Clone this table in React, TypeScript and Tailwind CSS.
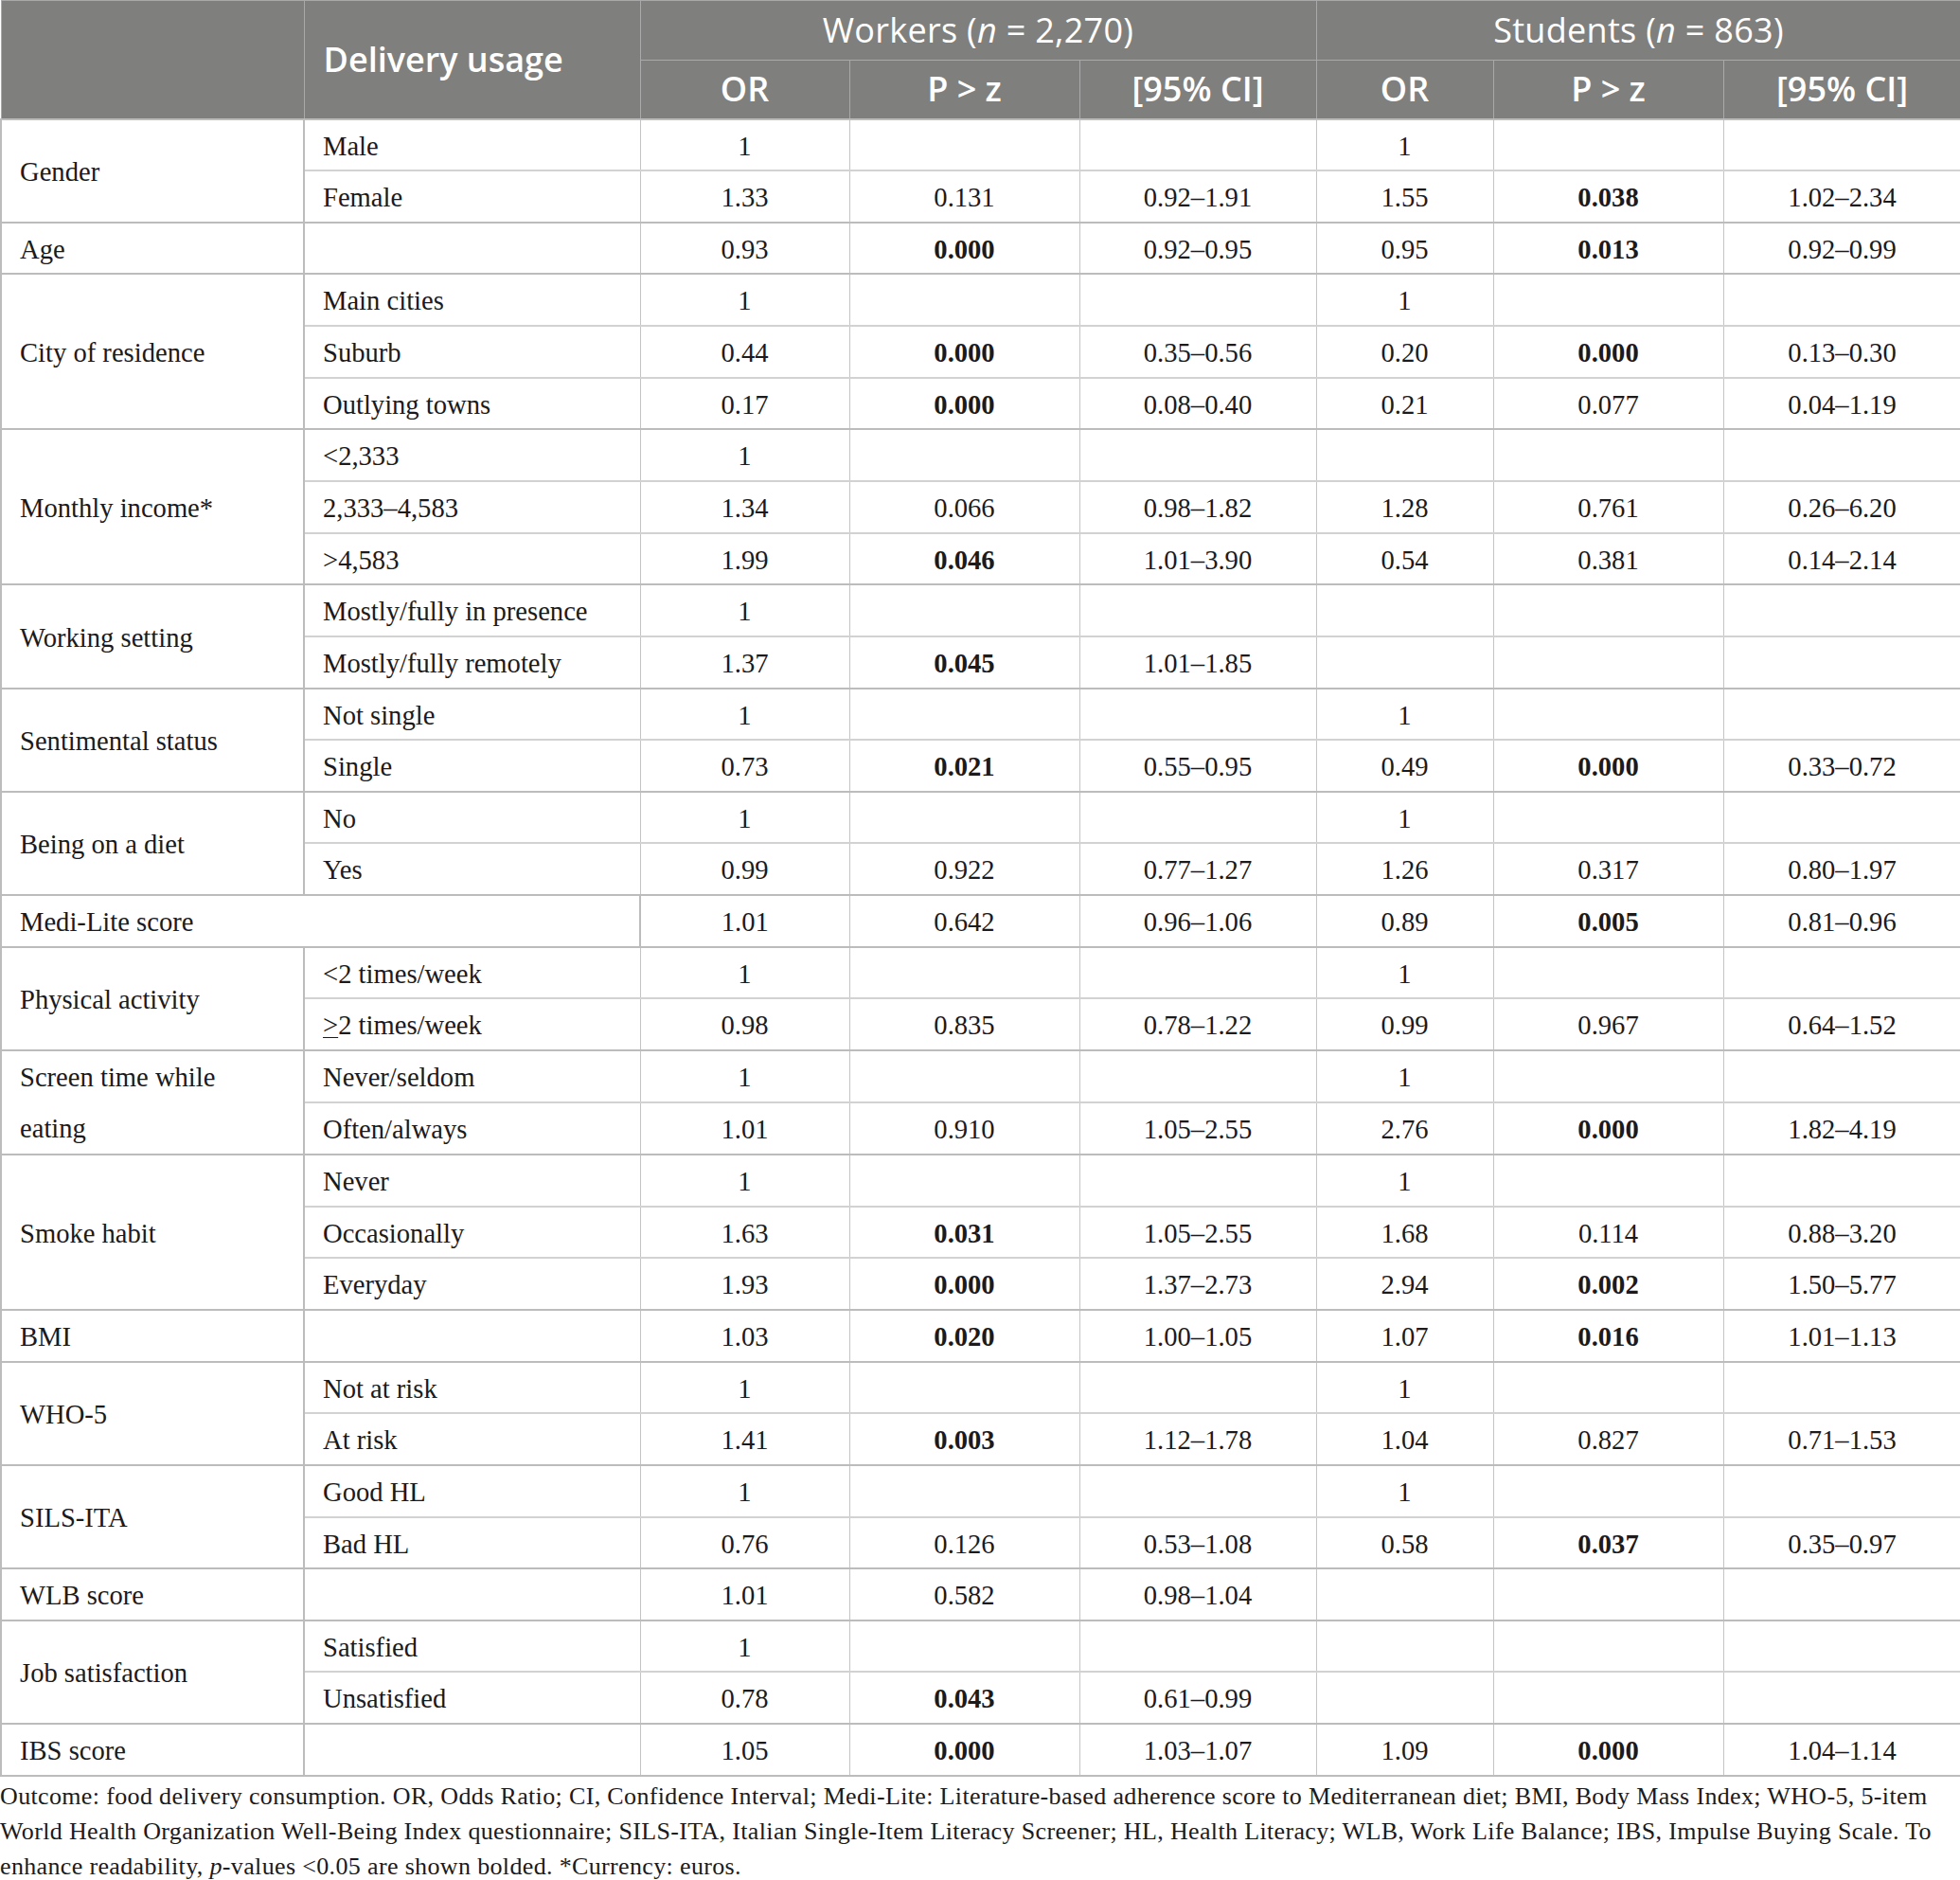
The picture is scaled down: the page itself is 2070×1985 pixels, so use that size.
import React from 'react';

type Row = string[];
type Group = { label: string; span?: boolean; rows: Row[] };

const groups: Group[] = [
  { label: 'Gender', rows: [['Male', '1', '', '', '1', '', ''], ['Female', '1.33', '0.131', '0.92–1.91', '1.55', '*0.038', '1.02–2.34']] },
  { label: 'Age', rows: [['', '0.93', '*0.000', '0.92–0.95', '0.95', '*0.013', '0.92–0.99']] },
  { label: 'City of residence', rows: [['Main cities', '1', '', '', '1', '', ''], ['Suburb', '0.44', '*0.000', '0.35–0.56', '0.20', '*0.000', '0.13–0.30'], ['Outlying towns', '0.17', '*0.000', '0.08–0.40', '0.21', '0.077', '0.04–1.19']] },
  { label: 'Monthly income*', rows: [['<2,333', '1', '', '', '', '', ''], ['2,333–4,583', '1.34', '0.066', '0.98–1.82', '1.28', '0.761', '0.26–6.20'], ['>4,583', '1.99', '*0.046', '1.01–3.90', '0.54', '0.381', '0.14–2.14']] },
  { label: 'Working setting', rows: [['Mostly/fully in presence', '1', '', '', '', '', ''], ['Mostly/fully remotely', '1.37', '*0.045', '1.01–1.85', '', '', '']] },
  { label: 'Sentimental status', rows: [['Not single', '1', '', '', '1', '', ''], ['Single', '0.73', '*0.021', '0.55–0.95', '0.49', '*0.000', '0.33–0.72']] },
  { label: 'Being on a diet', rows: [['No', '1', '', '', '1', '', ''], ['Yes', '0.99', '0.922', '0.77–1.27', '1.26', '0.317', '0.80–1.97']] },
  { label: 'Medi-Lite score', span: true, rows: [['', '1.01', '0.642', '0.96–1.06', '0.89', '*0.005', '0.81–0.96']] },
  { label: 'Physical activity', rows: [['<2 times/week', '1', '', '', '1', '', ''], ['GE2 times/week', '0.98', '0.835', '0.78–1.22', '0.99', '0.967', '0.64–1.52']] },
  { label: 'Screen time while|eating', rows: [['Never/seldom', '1', '', '', '1', '', ''], ['Often/always', '1.01', '0.910', '1.05–2.55', '2.76', '*0.000', '1.82–4.19']] },
  { label: 'Smoke habit', rows: [['Never', '1', '', '', '1', '', ''], ['Occasionally', '1.63', '*0.031', '1.05–2.55', '1.68', '0.114', '0.88–3.20'], ['Everyday', '1.93', '*0.000', '1.37–2.73', '2.94', '*0.002', '1.50–5.77']] },
  { label: 'BMI', rows: [['', '1.03', '*0.020', '1.00–1.05', '1.07', '*0.016', '1.01–1.13']] },
  { label: 'WHO-5', rows: [['Not at risk', '1', '', '', '1', '', ''], ['At risk', '1.41', '*0.003', '1.12–1.78', '1.04', '0.827', '0.71–1.53']] },
  { label: 'SILS-ITA', rows: [['Good HL', '1', '', '', '1', '', ''], ['Bad HL', '0.76', '0.126', '0.53–1.08', '0.58', '*0.037', '0.35–0.97']] },
  { label: 'WLB score', rows: [['', '1.01', '0.582', '0.98–1.04', '', '', '']] },
  { label: 'Job satisfaction', rows: [['Satisfied', '1', '', '', '', '', ''], ['Unsatisfied', '0.78', '*0.043', '0.61–0.99', '', '', '']] },
  { label: 'IBS score', rows: [['', '1.05', '*0.000', '1.03–1.07', '1.09', '*0.000', '1.04–1.14']] },
];

function Num({ v }: { v: string }) {
  if (v.startsWith('*')) return <span className="font-bold">{v.slice(1)}</span>;
  return <>{v}</>;
}

function Label({ v }: { v: string }) {
  if (v.startsWith('GE')) {
    return (
      <>
        <span className="underline underline-offset-[3px] decoration-1">{'>'}</span>
        {v.slice(2)}
      </>
    );
  }
  return <>{v}</>;
}

function GroupLabel({ v }: { v: string }) {
  const parts = v.split('|');
  return (
    <>
      {parts.map((p, i) => (
        <React.Fragment key={i}>
          {i > 0 && <br />}
          {p}
        </React.Fragment>
      ))}
    </>
  );
}

export default function App() {
  const hb = 'border border-[#a9a9a9]';
  return (
    <div className="w-[2070px] bg-white text-[#1c1a1b]">
      <table className="w-[2070px] table-fixed border-collapse">
        <colgroup>
          <col className="w-[320px]" />
          <col className="w-[355px]" />
          <col className="w-[221px]" />
          <col className="w-[243px]" />
          <col className="w-[250px]" />
          <col className="w-[187px]" />
          <col className="w-[243px]" />
          <col className="w-[251px]" />
        </colgroup>
        <thead className="bg-[#7f807e] text-white font-['Open_Sans',sans-serif]">
          <tr className="h-[63px]">
            <th rowSpan={2} className={hb}></th>
            <th rowSpan={2} className={`${hb} text-left pl-[20px] text-[36px] font-semibold`}>
              Delivery usage
            </th>
            <th colSpan={3} className={`${hb} text-[36px] font-normal tracking-[0.3px]`}>
              Workers (<i>n</i> = 2,270)
            </th>
            <th colSpan={3} className={`${hb} text-[36px] font-normal tracking-[0.3px]`}>
              Students (<i>n</i> = 863)
            </th>
          </tr>
          <tr className="h-[62px]">
            {['OR', 'P > z', '[95% CI]', 'OR', 'P > z', '[95% CI]'].map((t, i) => (
              <th key={i} className={`${hb} text-[36px] font-semibold`}>
                {t}
              </th>
            ))}
          </tr>
        </thead>
        <tbody className="font-['Liberation_Serif',serif] text-[28.6px]">
          {groups.map((g) =>
            g.rows.map((r, ri) => {
              const first = ri === 0;
              const bt = first ? 'border-t-2 border-t-[#bcbcbc]' : 'border-t-2 border-t-[#d2d2d2]';
              const multi = g.label.includes('|');
              return (
                <tr key={g.label + ri} className="h-[54.65px]">
                  {first && (
                    <td
                      rowSpan={g.rows.length}
                      colSpan={g.span ? 2 : 1}
                      className={`border-2 border-[#bcbcbc] pl-[19px] pr-[10px] align-middle ${
                        multi ? 'leading-[53.5px] pt-[1px]' : 'leading-none pt-[4px]'
                      }`}
                    >
                      <GroupLabel v={g.label} />
                    </td>
                  )}
                  {!g.span && (
                    <td className={`${bt} border-x border-x-[#c4c4c4] pl-[19px] pt-[4px] leading-none`}>
                      <Label v={r[0]} />
                    </td>
                  )}
                  {r.slice(1).map((v, ci) => (
                    <td key={ci} className={`${bt} border-x border-x-[#c4c4c4] text-center pt-[4px] leading-none`}>
                      <Num v={v} />
                    </td>
                  ))}
                </tr>
              );
            })
          )}
          <tr className="h-0">
            <td colSpan={8} className="border-t-2 border-t-[#bcbcbc] p-0"></td>
          </tr>
        </tbody>
      </table>
      <div className="font-['Liberation_Serif',serif] text-[26px] tracking-[0.35px] leading-[37px] text-[#1c1a1b] pt-[2px]">
        <div className="whitespace-nowrap">
          Outcome: food delivery consumption. OR, Odds Ratio; CI, Confidence Interval; Medi-Lite: Literature-based adherence score to Mediterranean diet; BMI, Body Mass Index; WHO-5, 5-item
        </div>
        <div className="whitespace-nowrap">
          World Health Organization Well-Being Index questionnaire; SILS-ITA, Italian Single-Item Literacy Screener; HL, Health Literacy; WLB, Work Life Balance; IBS, Impulse Buying Scale. To
        </div>
        <div className="whitespace-nowrap">
          enhance readability, <i>p</i>-values &lt;0.05 are shown bolded. *Currency: euros.
        </div>
      </div>
    </div>
  );
}
